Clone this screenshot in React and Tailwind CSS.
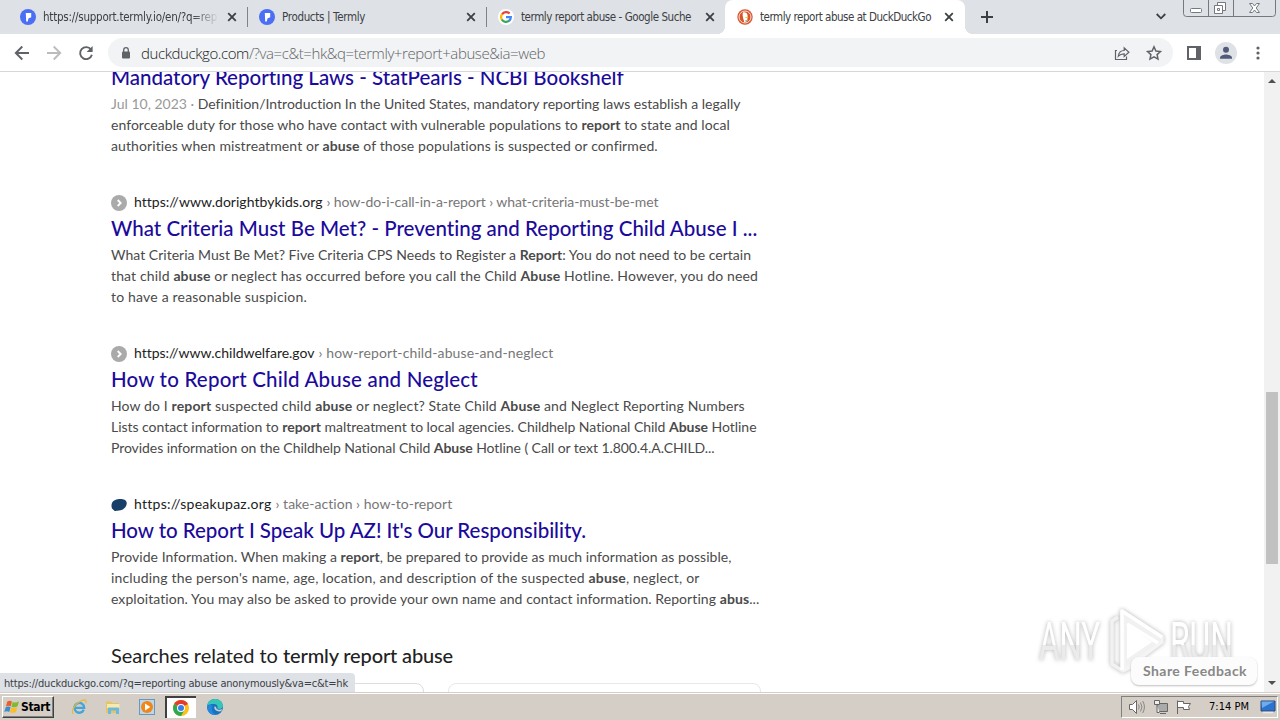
import { useLayoutEffect, useRef, useState } from 'react';

const tabs = [
  { title: 'https://support.termly.io/en/?q=rep', w: 174, icon: 'termly', fade: true },
  { title: 'Products | Termly', w: 83, icon: 'termly' },
  { title: 'termly report abuse - Google Suche', w: 170, icon: 'google' },
  { title: 'termly report abuse at DuckDuckGo', w: 171, icon: 'ddg', active: true },
];

const results = [
  {
    icon: 'arrow',
    domain: ['https://www.dorightbykids.org', 188],
    path: ['› how-do-i-call-in-a-report › what-criteria-must-be-met', 332],
    title: ['What Criteria Must Be Met? - Preventing and Reporting Child Abuse I ...', 647],
    lines: [
      [<>What Criteria Must Be Met? Five Criteria CPS Needs to Register a <b>Report</b>: You do not need to be certain</>, 640],
      [<>that child <b>abuse</b> or neglect has occurred before you call the Child <b>Abuse</b> Hotline. However, you do need</>, 647],
      ['to have a reasonable suspicion.', 196],
    ],
  },
  {
    icon: 'arrow',
    domain: ['https://www.childwelfare.gov', 180],
    path: ['› how-report-child-abuse-and-neglect', 235],
    title: ['How to Report Child Abuse and Neglect', 367],
    lines: [
      [<>How do I <b>report</b> suspected child <b>abuse</b> or neglect? State Child <b>Abuse</b> and Neglect Reporting Numbers</>, 634],
      [<>Lists contact information to <b>report</b> maltreatment to local agencies. Childhelp National Child <b>Abuse</b> Hotline</>, 646],
      [<>Provides information on the Childhelp National Child <b>Abuse</b> Hotline ( Call or text 1.800.4.A.CHILD...</>, 604],
    ],
  },
  {
    icon: 'speak',
    domain: ['https://speakupaz.org', 137],
    path: ['› take-action › how-to-report', 177],
    title: ["How to Report I Speak Up AZ! It's Our Responsibility.", 475],
    lines: [
      [<>Provide Information. When making a <b>report</b>, be prepared to provide as much information as possible,</>, 621],
      [<>including the person's name, age, location, and description of the suspected <b>abuse</b>, neglect, or</>, 589],
      [<>exploitation. You may also be asked to provide your own name and contact information. Reporting <b>abus</b>...</>, 649],
    ],
  },
];

// Spreads a single line of text over w pixels with letter spacing
function Fit({ w, className = '', children }) {
  const ref = useRef(null);
  const [spacing, setSpacing] = useState(0);

  useLayoutEffect(() => {
    const el = ref.current;
    setSpacing((w - el.getBoundingClientRect().width) / el.textContent.length);
  }, [w]);

  return (
    <span ref={ref} className={`inline-block whitespace-pre ${className}`} style={{ letterSpacing: `${spacing}px` }}>
      {children}
    </span>
  );
}

function TabIcon({ name }) {
  if (name === 'google') {
    return (
      <svg className="size-4 shrink-0" viewBox="0 0 16 16">
        <circle cx="8" cy="8" r="8" fill="#fff" />
        <g fill="none" strokeWidth="2.2">
          <path d="M4 5.3A4.9 4.9 0 0 1 11.6 4.6" stroke="#ea4335" />
          <path d="M4 5.2A4.9 4.9 0 0 0 4 10.8" stroke="#fbbc05" />
          <path d="M3.9 10.6A4.9 4.9 0 0 0 11.2 11.7" stroke="#34a853" />
          <path d="M8 8.1H12.9A4.9 4.9 0 0 1 11.1 11.8" stroke="#4285f4" />
        </g>
      </svg>
    );
  }
  if (name === 'ddg') {
    return (
      <svg className="size-4 shrink-0" viewBox="0 0 16 16">
        <circle cx="8" cy="8" r="7.7" fill="#d9532c" />
        <circle cx="8" cy="8" r="6" fill="none" stroke="#fbe3da" strokeWidth="1" />
        <path d="M5.8 3.6c2-.9 4.6.1 4.8 2.8.1 2-.4 3-.2 5.6l-3 1.6C6.7 11 5 7 5.8 3.6Z" fill="#fff" />
        <path d="M8.4 7.9h3.1l-1 1.2H8.4Z" fill="#f9c232" />
        <path d="M8.3 10.8l2.4 1-1.8 1.2Z" fill="#65bc46" />
      </svg>
    );
  }
  return (
    <svg className="size-4 shrink-0" viewBox="0 0 16 16">
      <circle cx="8" cy="8" r="8" fill="#4c6ef5" />
      <path d="M5.8 4h5.400v4.200l-2.800 1.300-.6 3H6.200Z" fill="#fff" />
    </svg>
  );
}

function CloseIcon() {
  return (
    <svg className="size-[10px] shrink-0" viewBox="0 0 10 10" stroke="#3c4043" strokeWidth="1.8">
      <path d="M1.2 1.2l7.6 7.6M8.8 1.2L1.2 8.8" />
    </svg>
  );
}

function TabStrip() {
  return (
    <div className="flex h-[34px] shrink-0 bg-[#dee1e6] pl-2">
      {tabs.map((tab, i) => (
        <div
          key={tab.title}
          className={`relative flex h-full items-center pl-3 ${
            tab.active ? 'w-[240px] rounded-t-lg bg-white pr-[11px]' : 'w-[239px] pr-[10px]'
          }`}
        >
          {tab.active && (
            <>
              <span className="absolute bottom-0 -left-2 size-2 bg-[radial-gradient(circle_at_0_0,#dee1e6_8px,#fff_8px)]" />
              <span className="absolute -right-2 bottom-0 size-2 bg-[radial-gradient(circle_at_100%_0,#dee1e6_8px,#fff_8px)]" />
            </>
          )}
          <TabIcon name={tab.icon} />
          <span className={`ml-[7px] w-[176px] overflow-hidden text-[11.5px] leading-4 text-[#3c4043] ${tab.fade ? 'mask-r-from-85%' : ''}`}>
            <Fit w={tab.w}>{tab.title}</Fit>
          </span>
          <span className="ml-auto flex">
            <CloseIcon />
          </span>
          {i < 2 && <span className="absolute top-[7px] -right-px h-5 w-px bg-[#808387]" />}
        </div>
      ))}
      <svg className="mt-[11px] ml-[16px] size-3" viewBox="0 0 12 12" stroke="#3c4043" strokeWidth="2">
        <path d="M6 0v12M0 6h12" />
      </svg>
      <svg className="mt-[13px] ml-[163px] h-[7px] w-[10px]" viewBox="0 0 10 7" fill="none" stroke="#3c4043" strokeWidth="1.8">
        <path d="M.7 1l4.3 4.3L9.3 1" />
      </svg>
      <svg className="ml-[17px] h-[17px] w-[93px]" viewBox="0 0 93 17" fill="none" stroke="#75797f">
        <path d="M.5 0v13.500a3 3 0 0 0 3 3h86a3 3 0 0 0 3-3V0M25.500 0v16M50.500 0v16" />
        <rect x="7.500" y="8.500" width="11" height="4" rx="1" fill="#fff" />
        <path d="M34.500 2.500h8v8h-8z" fill="#fff" />
        <path d="M31.500 5.500h8v8h-8zM34.500 8.500h2v2h-2z" fill="#fff" />
        <path d="M66.500 3.500h3l2 2.500 2-2.500h3l-3.300 4.500 3.300 4.500h-3l-2-2.500-2 2.500h-3L69.800 8Z" fill="#fff" />
      </svg>
    </div>
  );
}

function Toolbar() {
  return (
    <div className="flex h-[38px] shrink-0 items-center border-b border-[#d5d7da] bg-white">
      <svg className="ml-[14px] h-4 w-20" viewBox="0 0 80 16" fill="none" strokeWidth="1.9">
        <path d="M15 8H2M8.300 1.500L1.800 8l6.500 6.500" stroke="#5f6368" />
        <path d="M33 8h13M39.700 1.500L46.200 8l-6.500 6.500" stroke="#babcbe" />
        <path d="M77 4.600A6 6 0 1 0 77.900 9.800" stroke="#5f6368" />
        <path d="M78.600 1v6h-6Z" fill="#5f6368" />
      </svg>
      <div className="ml-[14px] flex h-[29px] w-[1065px] items-center rounded-full bg-[#f1f3f4] pl-[13px]">
        <svg className="h-3 w-[10px]" viewBox="0 0 10 12">
          <rect x="1" y="4.500" width="8" height="7" rx="1" fill="#5f6368" />
          <path d="M2.700 5V3a2.300 2.300 0 0 1 4.600 0v2" fill="none" stroke="#5f6368" strokeWidth="1.3" />
        </svg>
        <span className="ml-[10px] font-['Open_Sans','Noto_Sans',sans-serif] text-[15px] leading-5 font-light text-[#5f6368]">
          <Fit w={404}>
            <span className="text-[#202124]">duckduckgo.com</span>/?va=c&amp;t=hk&amp;q=termly+report+abuse&amp;ia=web
          </Fit>
        </span>
        <svg className="mr-[-1px] ml-auto h-4 w-[60px]" viewBox="0 0 60 16" fill="none" stroke="#5f6368" strokeWidth="1.2">
          <path d="M3 5.500H1.500v9h11v-3" />
          <path d="M4.300 11.200c.5-4 2.900-5.700 5.900-5.700V2.800l4.700 4.400-4.700 4.300V8.800c-2.700 0-4.300.6-5.900 2.400Z" />
          <path d="M40 1.800l1.900 4.200 4.500.5-3.300 3.100.9 4.500-4-2.200-4 2.200.9-4.500-3.300-3.100 4.500-.5Z" strokeWidth="1.5" />
        </svg>
      </div>
      <svg className="ml-[14px] h-[14px] w-[14px]" viewBox="0 0 14 14">
        <path d="M1 1h12v12H1Z" fill="none" stroke="#5f6368" strokeWidth="2" />
        <path d="M9 1h4v12H9Z" fill="#5f6368" />
      </svg>
      <svg className="ml-[14px] size-[22px]" viewBox="0 0 22 22">
        <circle cx="11" cy="11" r="11" fill="#dee1e6" />
        <circle cx="11" cy="7.800" r="3" fill="#53597a" />
        <path d="M5 16.800v-1.300c0-2 4-3.100 6-3.100s6 1.100 6 3.100v1.300Z" fill="#53597a" />
      </svg>
      <svg className="ml-[19px] h-[14px] w-1" viewBox="0 0 4 14" fill="#5f6368">
        <circle cx="2" cy="2" r="1.6" />
        <circle cx="2" cy="7" r="1.6" />
        <circle cx="2" cy="12" r="1.6" />
      </svg>
    </div>
  );
}

function Lines({ lines }) {
  return (
    <div className="text-sm leading-[21px] text-[#4a4a4a] [&_b]:font-bold">
      {lines.map(([text, w], i) => (
        <div key={i} className="h-[21px]">
          <Fit w={w}>{text}</Fit>
        </div>
      ))}
    </div>
  );
}

function ResultTitle({ title }) {
  return (
    <h2 className="h-[31px] text-[20.5px] leading-[31px] font-medium text-[#1b0a9c]">
      <Fit w={title[1]}>{title[0]}</Fit>
    </h2>
  );
}

function Result({ result }) {
  return (
    <article className="mt-[36px]">
      <div className="flex h-[21px] items-center pb-[2px] text-sm leading-[19px]">
        <svg className="mt-[3px] mr-[7px] size-4" viewBox="0 0 16 16">
          {result.icon === 'arrow' ? (
            <>
              <circle cx="8" cy="8" r="8" fill="#aaa" />
              <path d="M6.700 5l3 3-3 3" fill="none" stroke="#fff" strokeWidth="1.8" />
            </>
          ) : (
            <path d="M1 6C3 1 15 .5 15.700 5.500 16.200 9.500 13 13 8 13.600 6 14 5 14 3.500 14L3 13.200C.3 12 0 8.500 1 6Z" fill="#173f68" />
          )}
        </svg>
        <Fit w={result.domain[1]} className="text-[#222]">{result.domain[0]}</Fit>
        <Fit w={result.path[1]} className="ml-[4px] text-[#777]">{result.path[0]}</Fit>
      </div>
      <ResultTitle title={result.title} />
      <Lines lines={result.lines} />
    </article>
  );
}

function Watermark() {
  return (
    <svg className="absolute top-[534px] right-[40px] h-[72px] w-[210px]" viewBox="0 0 210 72">
      <defs>
        <linearGradient id="wm" x1="0" y1="0" x2="0" y2="1">
          <stop offset="55%" stopColor="#fff" />
          <stop offset="55%" stopColor="#ebebeb" />
        </linearGradient>
      </defs>
      <g className="drop-shadow-[0_0_2px_rgba(0,0,0,0.3)]" fill="url(#wm)">
        <text x="9" y="54" fontSize="53" textLength="61" lengthAdjust="spacingAndGlyphs" className="font-[Roboto,sans-serif]">ANY</text>
        <text x="140" y="54" fontSize="53" textLength="63" lengthAdjust="spacingAndGlyphs" className="font-[Roboto,sans-serif]">RUN</text>
        <g stroke="#fff" strokeWidth="3.5" strokeLinejoin="round">
          <path d="M88 11l-6 4v43l11 7 8-4" fill="none" stroke="#f2f2f2" />
          <path d="M92 5l40 26v5L94 64Z" fill="#f1f1f1" stroke="#f4f4f4" />
          <path d="M97 19l25 17-25 17Z" fill="#fff" stroke="none" />
          <path d="M92 64V5l40 26M97 18l31 19" fill="none" />
        </g>
      </g>
    </svg>
  );
}

function Page() {
  return (
    <main className="relative flex h-[620px] shrink-0 overflow-hidden bg-white font-[Lato,sans-serif]">
      <div className="-mt-[10px] ml-[111px] w-[650px] shrink-0">
        <ResultTitle title={['Mandatory Reporting Laws - StatPearls - NCBI Bookshelf', 513]} />
        <Lines
          lines={[
            [<><span className="text-[#999]">Jul 10, 2023 · </span>Definition/Introduction In the United States, mandatory reporting laws establish a legally</>, 630],
            [<>enforceable duty for those who have contact with vulnerable populations to <b>report</b> to state and local</>, 619],
            [<>authorities when mistreatment or <b>abuse</b> of those populations is suspected or confirmed.</>, 547],
          ]}
        />
        {results.map((result) => (
          <Result key={result.domain[0]} result={result} />
        ))}
        <h2 className="mt-[31px] h-[31px] text-[20px] leading-[31px] text-[#222]">
          <Fit w={172}>Searches related to </Fit>
          <Fit w={170} className="font-medium">termly report abuse</Fit>
        </h2>
        <div className="mt-[12px] flex gap-6">
          <div className="h-11 w-[313px] rounded-lg border border-[#ddd]" />
          <div className="h-11 w-[313px] rounded-lg border border-[#e8e8e8]" />
        </div>
      </div>

      {/* Scrollbar */}
      <div className="ml-auto flex w-4 flex-col items-center bg-[#f1f1f1]">
        <svg className="mt-[7px] h-1 w-2" viewBox="0 0 8 4" fill="#505050">
          <path d="M0 4l4-4 4 4Z" />
        </svg>
        <div className="mt-[309px] h-[172px] w-3 bg-[#c1c1c1]" />
        <svg className="mt-auto mb-[7px] h-1 w-2" viewBox="0 0 8 4" fill="#505050">
          <path d="M0 0h8L4 4Z" />
        </svg>
      </div>

      <Watermark />
      <div className="absolute right-[23px] bottom-[7px] flex h-[28px] w-[126px] items-center justify-center rounded-lg bg-[#fcfcfc] pb-px pl-[2px] text-sm font-bold text-[#888] shadow-[0_1px_2px_rgba(0,0,0,0.25)]">
        <Fit w={104}>Share Feedback</Fit>
      </div>

      {/* Link target bubble */}
      <div className="absolute bottom-0 left-0 flex h-[19px] w-[355px] items-center rounded-tr-[4px] bg-[#dee1e6] pt-[3px] pl-1 font-['DejaVu_Sans_Condensed','DejaVu_Sans',sans-serif] text-[11px] text-[#3c4043]">
        <Fit w={344}>https://duckduckgo.com/?q=reporting abuse anonymously&amp;va=c&amp;t=hk</Fit>
      </div>
    </main>
  );
}

function WindowsFlag() {
  return (
    <svg className="h-[14px] w-4 shrink-0" viewBox="0 0 16 14">
      <path d="M3.300 1.500C5 .6 6.500.6 8 1.600L6.800 6.300C5.300 5.400 3.700 5.400 2 6.300Z" fill="#e8602c" />
      <path d="M8.700 2C10.300 2.900 12.500 2.900 15 1.500L13.600 6.300C11.600 7.400 9.300 7.500 7.500 6.700Z" fill="#7fba32" />
      <path d="M1.800 7C3.400 6.200 5 6.200 6.600 7L5.300 12C3.800 11 2 11 .3 12Z" fill="#3b8bd0" />
      <path d="M7.300 7.400C9.200 8.200 11.400 8.200 13.400 7L12 12C10 13 7.700 13.200 6 12.300Z" fill="#f9bf2b" />
    </svg>
  );
}

function Taskbar() {
  return (
    <footer className="flex h-7 shrink-0 items-center border-t border-[#d4d0c8] bg-[#d5cec6] pt-px shadow-[inset_0_1px_0_#fff]">
      <div className="ml-[2px] flex h-[22px] w-[52px] items-center border border-t-white border-r-[#404040] border-b-[#404040] border-l-white pl-[1px] text-[#000] shadow-[inset_-1px_-1px_0_#808080]">
        <WindowsFlag />
        <span className="ml-px text-xs leading-4 font-bold">
          <Fit w={29}>Start</Fit>
        </span>
      </div>
      {/* Internet Explorer */}
      <svg className="ml-[17px] size-4" viewBox="0 0 16 16" fill="none">
        <path d="M12.800 10.800A4.900 4.900 0 1 1 13.200 8.900H4" stroke="#42a5dc" strokeWidth="2.3" />
        <path d="M2.500 14.800C-.8 13 4 4 11.500 1.300c3-1 4.200 0 3.200 2.900" stroke="#e6b837" strokeWidth="1.2" />
      </svg>
      {/* Explorer */}
      <svg className="ml-[18px] size-4" viewBox="0 0 16 16">
        <path d="M1 2.500h5l1 1.500h7v10H1Z" fill="#e5c463" />
        <path d="M2 5h12.500v4H2Z" fill="#f8eaae" />
        <path d="M3 15V9.500q0-1 1-1h9q1 0 1 1V15h-3v-3.500H6V15Z" fill="#6cb9dc" />
      </svg>
      {/* Media player */}
      <svg className="ml-[18px] size-4" viewBox="0 0 16 16">
        <rect x=".5" y=".5" width="15" height="15" fill="#bcd6ea" stroke="#6898bd" />
        <circle cx="8" cy="8" r="6" fill="#f28518" />
        <path d="M6 4.500L11.300 8 6 11.500Z" fill="#fff" />
      </svg>
      <div className="ml-[10px] flex h-[22px] w-[31px] items-center justify-center border-t-2 border-l-2 border-[#404040] border-r-white border-b-white bg-white pr-px pb-px">
        <svg className="size-4" viewBox="0 0 16 16">
          <circle cx="8" cy="8" r="8" fill="#fbc116" />
          <path d="M8 8L1.100 4A8 8 0 0 1 14.900 4Z" fill="#e33b2e" />
          <path d="M8 8L1.100 4A8 8 0 0 0 8 16l3.500-6Z" fill="#2da94f" />
          <circle cx="8" cy="8" r="4" fill="#fff" />
          <circle cx="8" cy="8" r="3" fill="#3a7de8" />
        </svg>
      </div>
      {/* Edge */}
      <svg className="ml-[11px] size-4" viewBox="0 0 16 16">
        <circle cx="8" cy="8" r="8" fill="#1673c4" />
        <path d="M.2 7C1-2 15-2.500 15.900 6.500c.2 3.200-3 4-5.700 3 1.200-2.500-.5-4.500-3-4.500C4 5 1 5.500.2 7Z" fill="#36c6b8" />
        <path d="M7.500 7.500c2 0 1.500 2 2.700 2.700 1.600.9 3.800.5 4.800-.2l-.6 2C11 13.500 6.500 11 7.500 7.500Z" fill="#d5cec6" />
        <path d="M5.500 6.800C4 9.500 5 14.500 9 15.900 3 16.500 0 12 .2 7.500 1.500 5.500 4 5.500 5.500 6.800Z" fill="#2388dc" />
      </svg>

      <div className="mr-[2px] ml-auto flex h-[22px] w-[157px] items-center border border-t-[#808080] border-r-white border-b-white border-l-[#808080] pl-[6px]">
        <svg className="h-4 w-16" viewBox="0 0 64 16" fill="none" stroke="#666">
          <path d="M1.500 5.500h3l4-4v13l-4-4h-3Z" fill="#fff" />
          <path d="M10.500 5.500q1.500 2.500 0 5M12.500 3.500q3 4.500 0 9M14.700 2q3.500 6 0 12" stroke="#8a8782" />
          <path d="M29.500 4.500h10v8h-10zM32 14.500h6" fill="#aaa" />
          <path d="M26.500 1.500h5v4h-5zM29 5.500v8h2.500" fill="#eee" />
          <path d="M49.500 15V1.500M49.500 2.500h6v2h7l-2 3 1 3h-6v-2h-6" fill="#fff" />
        </svg>
        <span className="ml-[17px] text-[11px] leading-4 text-black">
          <Fit w={40}>7:14 PM</Fit>
        </span>
        <svg className="mr-[1px] ml-auto h-[14px] w-4" viewBox="0 0 16 14">
          <path d="M1 1h14v10H1Z" fill="#2e72cf" stroke="#294a7e" />
          <path d="M1.500 1.500H14L2 8Z" fill="#6facec" />
          <path d="M3 12.500h10" stroke="#e8e8e8" strokeWidth="1.5" />
        </svg>
      </div>
    </footer>
  );
}

export default function App() {
  return (
    <div className="flex h-[720px] w-[1280px] flex-col overflow-hidden bg-white font-['DejaVu_Sans_Condensed','DejaVu_Sans',sans-serif]">
      <TabStrip />
      <Toolbar />
      <Page />
      <Taskbar />
    </div>
  );
}
